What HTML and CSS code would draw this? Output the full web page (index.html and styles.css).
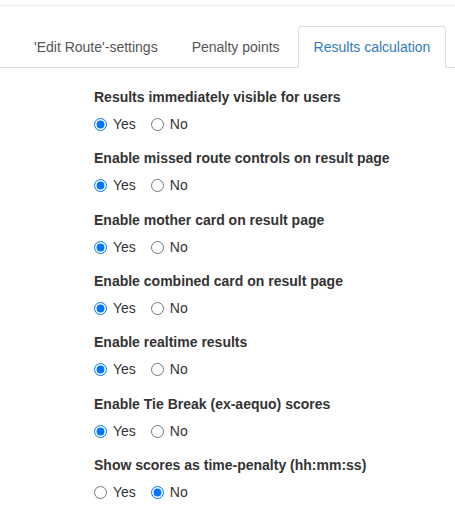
FILE: index.html
```
<!DOCTYPE html>
<html>
<head>
<meta charset="utf-8">
<link rel="stylesheet" href="styles.css">
</head>
<body>
<div class="topbar"></div>
<ul class="tabs">
  <li class="tab"><a>'Edit Route'-settings</a></li>
  <li class="tab"><a>Penalty points</a></li>
  <li class="tab active"><a>Results calculation</a></li>
</ul>
<form class="settings">
  <div class="group">
    <div class="label">Results immediately visible for users</div>
    <div class="options">
      <label class="opt"><input type="radio" name="g1" checked>Yes</label>
      <label class="opt"><input type="radio" name="g1">No</label>
    </div>
  </div>
  <div class="group">
    <div class="label">Enable missed route controls on result page</div>
    <div class="options">
      <label class="opt"><input type="radio" name="g2" checked>Yes</label>
      <label class="opt"><input type="radio" name="g2">No</label>
    </div>
  </div>
  <div class="group">
    <div class="label">Enable mother card on result page</div>
    <div class="options">
      <label class="opt"><input type="radio" name="g3" checked>Yes</label>
      <label class="opt"><input type="radio" name="g3">No</label>
    </div>
  </div>
  <div class="group">
    <div class="label">Enable combined card on result page</div>
    <div class="options">
      <label class="opt"><input type="radio" name="g4" checked>Yes</label>
      <label class="opt"><input type="radio" name="g4">No</label>
    </div>
  </div>
  <div class="group">
    <div class="label">Enable realtime results</div>
    <div class="options">
      <label class="opt"><input type="radio" name="g5" checked>Yes</label>
      <label class="opt"><input type="radio" name="g5">No</label>
    </div>
  </div>
  <div class="group">
    <div class="label">Enable Tie Break (ex-aequo) scores</div>
    <div class="options">
      <label class="opt"><input type="radio" name="g6" checked>Yes</label>
      <label class="opt"><input type="radio" name="g6">No</label>
    </div>
  </div>
  <div class="group">
    <div class="label">Show scores as time-penalty (hh:mm:ss)</div>
    <div class="options">
      <label class="opt"><input type="radio" name="g7">Yes</label>
      <label class="opt"><input type="radio" name="g7" checked>No</label>
    </div>
  </div>
</form>
</body>
</html>
```
FILE: styles.css
```
html, body {
  margin: 0;
  padding: 0;
  background: #fff;
  font-family: "Liberation Sans", Arial, sans-serif;
  font-size: 14px;
  line-height: 20px;
  color: #333;
}
.topbar {
  height: 5px;
  border-bottom: 1px solid #eee;
}
.tabs {
  list-style: none;
  margin: 20px 0 0 0;
  padding: 0 0 0 18px;
  display: flex;
  gap: 2px;
  border-bottom: 1px solid #ddd;
}
.tab {
  margin-bottom: -1px;
}
.tab a {
  display: block;
  padding: 10px 15px;
  border: 1px solid transparent;
  border-radius: 4px 4px 0 0;
  color: #555;
  cursor: pointer;
}
.tab.active a {
  color: #337ab7;
  border-color: #ddd #ddd transparent #ddd;
  background: #fff;
}
.settings {
  padding: 19px 0 0 94px;
}
.group {
  margin-bottom: 14.33px;
}
.label {
  font-weight: bold;
  margin-bottom: 7px;
}
.options {
  display: flex;
  gap: 15px;
  height: 20px;
  align-items: center;
}
.opt {
  display: flex;
  align-items: center;
  gap: 6px;
}
.opt input {
  margin: 1px 0 0 0;
  width: 13px;
  height: 13px;
}
```
